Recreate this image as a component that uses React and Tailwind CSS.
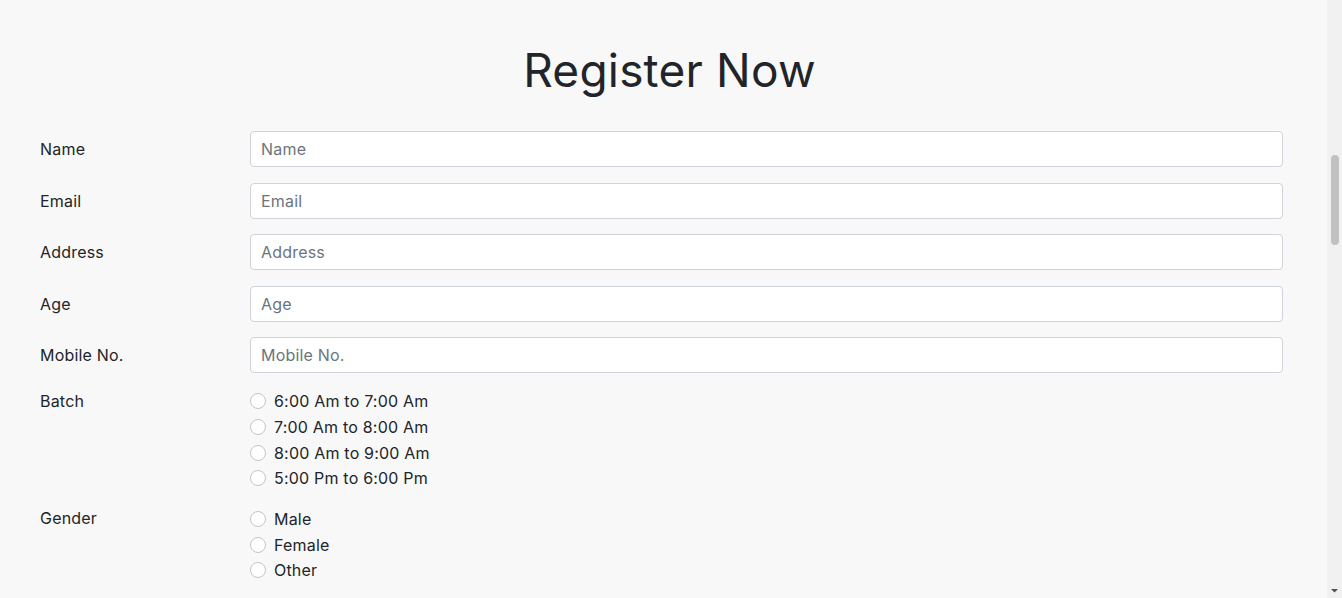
const fields = ['Name', 'Email', 'Address', 'Age', 'Mobile No.'];
const batches = ['6:00 Am to 7:00 Am', '7:00 Am to 8:00 Am', '8:00 Am to 9:00 Am', '5:00 Pm to 6:00 Pm'];
const genders = ['Male', 'Female', 'Other'];

const Radio = ({ name, label }) => (
    <label className="flex items-center gap-2 h-[25.7px]">
        <input type="radio" name={name} className="appearance-none w-4 h-4 rounded-full border border-[#c4c4c4] bg-white" />
        <span>{label}</span>
    </label>
);

const Scrollbar = () => (
    <div className="w-[15px] shrink-0 bg-[#f1f1f1] flex flex-col items-center">
        <svg width="15" height="15" viewBox="0 0 15 15" className="shrink-0">
            <path d="M4 9 L7.5 5.5 L11 9 Z" fill="#f1f1f1" />
        </svg>
        <div className="mt-[140px] w-[8px] h-[90px] rounded-sm bg-[#c1c1c1]" />
        <div className="flex-1" />
        <svg width="15" height="15" viewBox="0 0 15 15" className="shrink-0">
            <path d="M4 6 L7.5 9.5 L11 6 Z" fill="#505050" />
        </svg>
    </div>
);

export default function App() {
    return (
        <div className="h-[598px] overflow-hidden flex bg-[#f8f8f8] text-[#212529] font-['Inter',sans-serif] text-[16px] tracking-[0.2px]">
            <div className="flex-1">
                <h1 className="pt-[40px] text-center text-[46px] leading-[60px] font-normal pl-[12px]">Register Now</h1>
                <form className="pt-[31px] pl-[40px] pr-[44px]">
                    {fields.map((f) => (
                        <div key={f} className="flex items-center mb-[15.5px]">
                            <label className="w-[210px] shrink-0">{f}</label>
                            <input
                                placeholder={f}
                                className="flex-1 h-[36px] bg-white border border-[#ced4da] rounded-[4px] px-[10px] placeholder:text-[#6c757d] outline-none"
                            />
                        </div>
                    ))}
                    <div className="flex mt-[2px]">
                        <span className="w-[210px] shrink-0 leading-[25.7px]">Batch</span>
                        <div className="flex flex-col">
                            {batches.map((b) => <Radio key={b} name="batch" label={b} />)}
                        </div>
                    </div>
                    <div className="flex mt-[15px]">
                        <span className="w-[210px] shrink-0 leading-[25.7px]">Gender</span>
                        <div className="flex flex-col">
                            {genders.map((g) => <Radio key={g} name="gender" label={g} />)}
                        </div>
                    </div>
                </form>
            </div>
            <Scrollbar />
        </div>
    );
}
